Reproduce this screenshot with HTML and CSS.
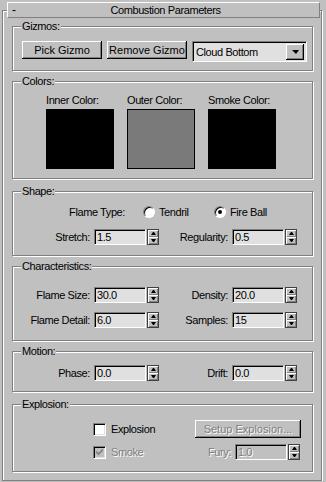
FILE: index.html
```html
<!doctype html>
<html lang="en">

<head>
    <meta charset="utf-8">
    <meta name="viewport" content="width=device-width, initial-scale=1">
    <title>Combustion Parameters</title>

    <link rel="stylesheet" href="styles.css">
</head>

<body>
    <div class="rollout">
        <div class="rollout_title">
            <span class="minus">-</span>
            <span class="title_text">Combustion Parameters</span>
        </div>

        <!-- Gizmos -->
        <div class="group gizmos">
            <div class="group_label">Gizmos:</div>
            <div class="gizmo_row">
                <button class="btn btn_gizmo">Pick Gizmo</button>
                <button class="btn btn_gizmo">Remove Gizmo</button>
                <div class="dropdown">
                    <span class="dropdown_text">Cloud Bottom</span>
                    <span class="dropdown_btn"><span class="tri_down"></span></span>
                </div>
            </div>
        </div>

        <!-- Colors -->
        <div class="group colors">
            <div class="group_label">Colors:</div>
            <div class="color_row">
                <div class="color_col">
                    <div class="color_label">Inner Color:</div>
                    <div class="swatch swatch_black"></div>
                </div>
                <div class="color_col">
                    <div class="color_label">Outer Color:</div>
                    <div class="swatch swatch_gray"></div>
                </div>
                <div class="color_col">
                    <div class="color_label">Smoke Color:</div>
                    <div class="swatch swatch_black"></div>
                </div>
            </div>
        </div>

        <!-- Shape -->
        <div class="group shape">
            <div class="group_label">Shape:</div>
            <div class="radio_row">
                <span class="radio_caption">Flame Type:</span>
                <label class="radio_item"><span class="radio"></span>Tendril</label>
                <label class="radio_item"><span class="radio checked"></span>Fire Ball</label>
            </div>
            <div class="spin_row first_row">
                <span class="spin_label">Stretch:</span>
                <span class="spinner"><span class="field">1.5</span><span class="arrows"><span class="up"></span><span class="down"></span></span></span>
                <span class="spin_label">Regularity:</span>
                <span class="spinner"><span class="field">0.5</span><span class="arrows"><span class="up"></span><span class="down"></span></span></span>
            </div>
        </div>

        <!-- Characteristics -->
        <div class="group characteristics">
            <div class="group_label">Characteristics:</div>
            <div class="spin_row first_row">
                <span class="spin_label">Flame Size:</span>
                <span class="spinner"><span class="field">30.0</span><span class="arrows"><span class="up"></span><span class="down"></span></span></span>
                <span class="spin_label">Density:</span>
                <span class="spinner"><span class="field">20.0</span><span class="arrows"><span class="up"></span><span class="down"></span></span></span>
            </div>
            <div class="spin_row second_row">
                <span class="spin_label">Flame Detail:</span>
                <span class="spinner"><span class="field">6.0</span><span class="arrows"><span class="up"></span><span class="down"></span></span></span>
                <span class="spin_label">Samples:</span>
                <span class="spinner"><span class="field">15</span><span class="arrows"><span class="up"></span><span class="down"></span></span></span>
            </div>
        </div>

        <!-- Motion -->
        <div class="group motion">
            <div class="group_label">Motion:</div>
            <div class="spin_row motion_row">
                <span class="spin_label">Phase:</span>
                <span class="spinner"><span class="field">0.0</span><span class="arrows"><span class="up"></span><span class="down"></span></span></span>
                <span class="spin_label">Drift:</span>
                <span class="spinner"><span class="field">0.0</span><span class="arrows"><span class="up"></span><span class="down"></span></span></span>
            </div>
        </div>

        <!-- Explosion -->
        <div class="group explosion">
            <div class="group_label">Explosion:</div>
            <div class="explosion_row">
                <label class="check_item"><span class="checkbox"></span>Explosion</label>
                <button class="btn btn_setup" disabled>Setup Explosion...</button>
            </div>
            <div class="explosion_row smoke_row">
                <label class="check_item disabled"><span class="checkbox checked">
                    <svg width="7" height="7" viewBox="0 0 7 7"><path d="M0 2.5 L2.5 5 L7 0.5" fill="none" stroke="#808080" stroke-width="1.6"/></svg>
                </span>Smoke</label>
                <span class="fury_label">Fury:</span>
                <span class="spinner disabled"><span class="field">1.0</span><span class="arrows"><span class="up"></span><span class="down"></span></span></span>
            </div>
        </div>
    </div>
</body>

</html>
```

FILE: styles.css
```css
/* 3ds Max style rollout */
* {
    box-sizing: border-box;
}

body {
    margin: 0;
    background-color: #c0c0c0;
    font-family: "Liberation Sans", Arial, sans-serif;
    font-size: 11px;
    letter-spacing: -0.4px;
    color: #000;
}

.rollout {
    margin: 10px 4px 0 2px;
    padding: 0 8px 8px 9px;
    border: 1px solid #808080;
    box-shadow: inset 1px 1px 0 #fff, 1px 1px 0 #fff;
}

.rollout_title {
    display: grid;
    grid-template-columns: 1fr auto 1fr;
    align-items: center;
    height: 16px;
    margin: -9px -7px 0 -5px;
    padding-left: 4px;
    line-height: 14px;
    background-color: #c0c0c0;
    border: 1px solid;
    border-color: #fff #808080 #808080 #fff;
}

.minus {
    font-size: 12px;
}

/* group boxes */
.group {
    margin-top: 10px;
    border: 1px solid #808080;
    box-shadow: inset 1px 1px 0 #fff, 1px 1px 0 #fff;
}

.group_label {
    width: max-content;
    margin: -7px 0 0 8px;
    padding: 0 1px;
    line-height: 13px;
    background-color: #c0c0c0;
}

.gizmos {
    margin-top: 8px;
    padding-bottom: 8px;
}

.colors {
    padding-bottom: 9px;
}

.shape {
    margin-top: 12px;
    padding-bottom: 10px;
}

.characteristics {
    padding-bottom: 12px;
}

.motion {
    padding-bottom: 10px;
}

.explosion {
    margin-top: 12px;
    padding-bottom: 11px;
}

/* buttons */
.btn {
    height: 18px;
    padding: 0;
    border: none;
    background-color: #c0c0c0;
    font: inherit;
    color: #000;
    box-shadow: inset -1px -1px 0 #000, inset 1px 1px 0 #fff, inset -2px -2px 0 #808080;
}

.btn:disabled {
    color: #808080;
    text-shadow: 1px 1px 0 #fff;
}

.gizmo_row {
    display: flex;
    align-items: flex-start;
    gap: 5px;
    margin-top: 8px;
    padding-left: 9px;
}

.btn_gizmo {
    width: 80px;
}

.dropdown {
    display: flex;
    align-items: center;
    width: 115px;
    height: 21px;
    padding: 0 2px 0 3px;
    background-color: #e0e0e0;
    border: 1px solid;
    border-color: #808080 #fff #fff #808080;
    box-shadow: inset 1px 1px 0 #000, inset -1px -1px 0 #dfdfdf;
}

.dropdown_text {
    flex: 1;
}

.dropdown_btn {
    display: flex;
    align-items: center;
    justify-content: center;
    width: 18px;
    height: 16px;
    background-color: #c0c0c0;
    box-shadow: inset -1px -1px 0 #000, inset 1px 1px 0 #fff, inset -2px -2px 0 #808080;
}

.tri_down {
    width: 0;
    height: 0;
    border-left: 4px solid transparent;
    border-right: 3px solid transparent;
    border-top: 4px solid #000;
}

/* colors */
.color_row {
    display: flex;
    gap: 13px;
    margin-top: 6px;
    padding-left: 33px;
}

.color_col {
    width: 68px;
}

.color_label {
    line-height: 13px;
    margin-bottom: 2px;
    white-space: nowrap;
}

.swatch {
    height: 60px;
    border: 1px solid #000;
}

.swatch_black {
    background-color: #000;
}

.swatch_gray {
    background-color: #7a7a7a;
}

/* radios */
.radio_row {
    display: flex;
    align-items: center;
    height: 13px;
    margin-top: 7px;
}

.radio_caption {
    width: 112px;
    margin-right: 18px;
    text-align: right;
}

.radio_item {
    display: flex;
    align-items: center;
    width: 71px;
}

.radio {
    position: relative;
    width: 12px;
    height: 12px;
    margin-right: 4px;
    border-radius: 50%;
    border: 1px solid;
    border-color: #808080 #fff #fff #808080;
    background-color: #fff;
    box-shadow: inset 1px 1px 0 #000;
}

.radio.checked::after {
    content: "";
    position: absolute;
    left: 3px;
    top: 3px;
    width: 4px;
    height: 4px;
    border-radius: 50%;
    background-color: #000;
}

/* spinners */
.spin_row {
    display: grid;
    grid-template-columns: 77px 65px 65px 65px;
    column-gap: 4px;
    align-items: center;
}

.spin_label {
    text-align: right;
    white-space: nowrap;
}

.shape .first_row {
    margin-top: 11px;
}

.characteristics .first_row {
    margin-top: 14px;
}

.second_row {
    margin-top: 9px;
}

.motion_row {
    margin-top: 7px;
}

.spinner {
    display: flex;
    gap: 1px;
}

.field {
    width: 52px;
    height: 16px;
    padding-left: 2px;
    line-height: 14px;
    background-color: #e0e0e0;
    border: 1px solid;
    border-color: #808080 #fff #fff #808080;
    box-shadow: inset 1px 1px 0 #000;
}

.arrows {
    display: flex;
    flex-direction: column;
    width: 12px;
    height: 16px;
    border: 1px solid #404040;
}

.arrows span {
    position: relative;
    flex: 1;
    background-color: #c0c0c0;
    box-shadow: inset 1px 1px 0 #fff, inset -1px -1px 0 #808080;
}

.arrows span::after {
    content: "";
    position: absolute;
    left: 3px;
    width: 1px;
    border-left: 2px solid transparent;
    border-right: 2px solid transparent;
}

.arrows .up::after {
    top: 2px;
    border-bottom: 3px solid #000;
}

.arrows .down::after {
    top: 2px;
    border-top: 3px solid #000;
}

.spinner.disabled .field {
    background-color: #c0c0c0;
    color: #808080;
    text-shadow: 1px 1px 0 #fff;
}

/* explosion */
.explosion_row {
    display: flex;
    align-items: center;
    margin-top: 9px;
    padding-left: 80px;
}

.smoke_row {
    margin-top: 6px;
}

.check_item {
    display: flex;
    align-items: center;
    width: 102px;
}

.check_item.disabled {
    color: #808080;
    text-shadow: 1px 1px 0 #fff;
}

.checkbox {
    display: flex;
    align-items: center;
    justify-content: center;
    width: 13px;
    height: 13px;
    margin-right: 5px;
    background-color: #fff;
    border: 1px solid;
    border-color: #808080 #fff #fff #808080;
    box-shadow: inset 1px 1px 0 #000, inset -1px -1px 0 #dfdfdf;
}

.checkbox.checked {
    background-color: #c0c0c0;
}

.btn_setup {
    width: 106px;
}

.fury_label {
    width: 36px;
    margin-right: 4px;
    text-align: right;
    color: #808080;
    text-shadow: 1px 1px 0 #fff;
}
```
